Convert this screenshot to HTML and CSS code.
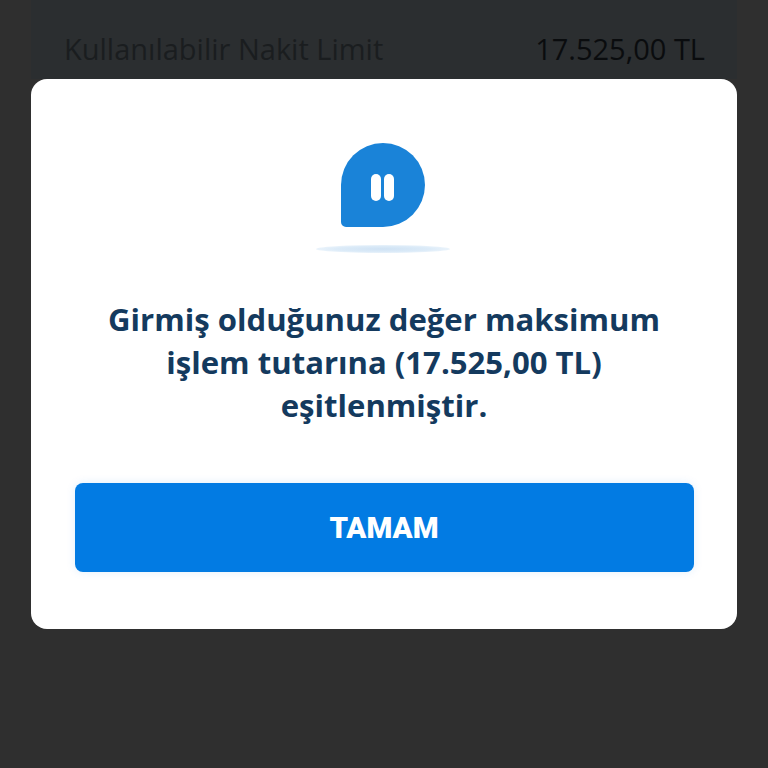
FILE: index.html
```html
<!DOCTYPE html>
<html lang="en">
<head>
    <meta charset="UTF-8">
    <meta name="viewport" content="width=device-width, initial-scale=1.0">
    <title>Uyarı</title>
    <link rel="stylesheet" href="styles.css">
</head>
<body>
    <div class="screen">
        <div class="limit-row">
            <span class="limit-label">Kullanılabilir Nakit Limit</span>
            <span class="limit-value">17.525,00 TL</span>
        </div>
    </div>
    <div class="modal">
        <div class="icon-wrap">
            <svg class="icon" width="84" height="84" viewBox="0 0 84 84">
                <path d="M42 0a42 42 0 0 1 0 84H5a5 5 0 0 1-5-5V42A42 42 0 0 1 42 0z" fill="#1a83d8"/>
                <rect x="30" y="31" width="10" height="27" rx="5" fill="#fff"/>
                <rect x="43" y="31" width="10" height="27" rx="5" fill="#fff"/>
            </svg>
            <div class="icon-shadow"></div>
        </div>
        <p class="message">Girmiş olduğunuz değer maksimum<br>işlem tutarına (17.525,00 TL)<br>eşitlenmiştir.</p>
        <button class="ok-button">TAMAM</button>
    </div>
</body>
</html>
```

FILE: styles.css
```css
*{
    margin: 0;
    padding: 0;
    box-sizing: border-box;
}
body{
    font-family: "Open Sans", sans-serif;
    width: 768px;
    height: 768px;
    overflow: hidden;
    background-color: #2f2f2f;
}

.screen {
    width: 706px;
    height: 79px;
    margin-left: 31px;
    background-color: #2b2e30;
    padding: 31px 32px 0 33px;
}
.limit-row {
    display: flex;
    justify-content: space-between;
    align-items: center;
}
.limit-label {
    font-size: 29px;
    line-height: 36px;
    color: #1a1d1f;
}
.limit-value {
    font-size: 29px;
    line-height: 36px;
    color: #0a0c0e;
}

.modal {
    width: 706px;
    height: 550px;
    margin-left: 31px;
    background-color: white;
    border-radius: 16px;
    padding: 64px 44px 0 44px;
    display: flex;
    flex-direction: column;
    align-items: center;
}

.icon-wrap {
    margin-right: 3px;
    display: flex;
    flex-direction: column;
    align-items: center;
}
.icon {
    display: block;
}
.icon-shadow {
    width: 134px;
    height: 8px;
    margin-top: 18px;
    border-radius: 50%;
    background: radial-gradient(ellipse at center, #cfe2f4 0%, #dcebf8 50%, rgba(255,255,255,0) 100%);
}

.message {
    margin-top: 45px;
    font-size: 31.1px;
    line-height: 43px;
    font-weight: 700;
    text-align: center;
    color: #143a5e;
}

.ok-button {
    width: 619px;
    height: 89px;
    margin-top: 56px;
    border: none;
    border-radius: 8px;
    background-color: #027be3;
    box-shadow: 0 0 10px rgba(2, 123, 227, 0.12);
    color: white;
    font-family: Roboto, sans-serif;
    font-size: 29.5px;
    font-weight: 900;
}
```
